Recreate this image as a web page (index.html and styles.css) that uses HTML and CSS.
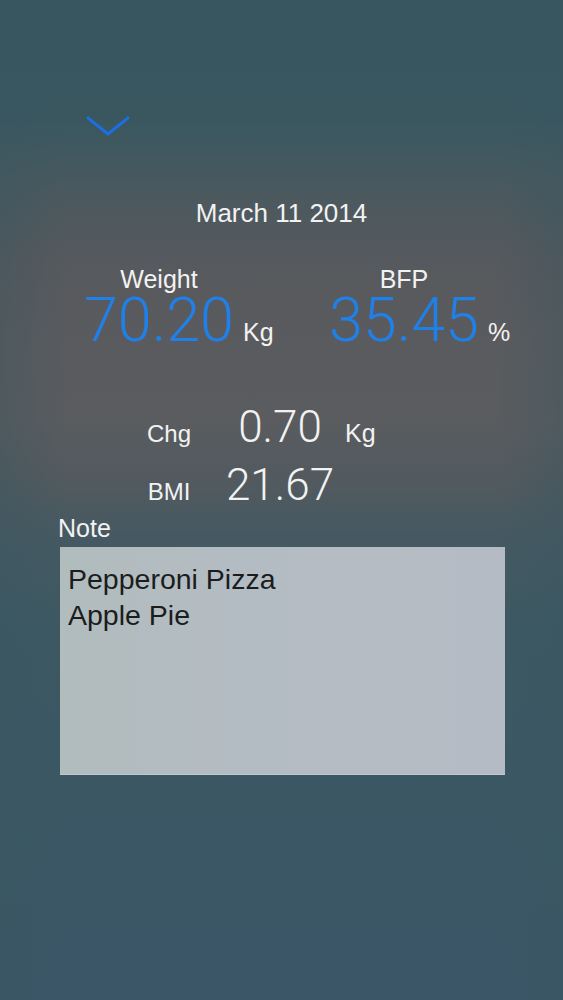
FILE: index.html
```html
<!DOCTYPE html>
<html lang="en">
<head>
<meta charset="utf-8">
<title>Weight Entry</title>
<link rel="stylesheet" href="styles.css">
</head>
<body>
<main class="screen">
  <div class="top">
    <svg class="chevron" width="44" height="22" viewBox="0 0 44 22" aria-hidden="true">
      <polyline points="2,3 22,19 42,3" fill="none" stroke="#1b6fe0" stroke-width="3" stroke-linecap="round" stroke-linejoin="round"/>
    </svg>
  </div>
  <div class="date">March 11 2014</div>
  <div class="metrics">
    <div class="metric">
      <div class="metric-label">Weight</div>
      <div class="metric-value">70.20</div>
      <div class="metric-unit">Kg</div>
    </div>
    <div class="metric">
      <div class="metric-label">BFP</div>
      <div class="metric-value">35.45</div>
      <div class="metric-unit">%</div>
    </div>
  </div>
  <div class="stats">
    <div class="stat-label">Chg</div>
    <div class="stat-value">0.70</div>
    <div class="stat-unit">Kg</div>
    <div class="stat-label">BMI</div>
    <div class="stat-value">21.67</div>
    <div class="stat-unit"></div>
  </div>
  <section class="note">
    <div class="note-label">Note</div>
    <div class="note-box">
      <div class="note-line">Pepperoni Pizza</div>
      <div class="note-line">Apple Pie</div>
    </div>
  </section>
</main>
</body>
</html>
```

FILE: styles.css
```css
* { box-sizing: border-box; }
html, body { margin: 0; padding: 0; }
body {
  font-family: "Liberation Sans", Arial, sans-serif;
  color: #f2f2f2;
}
.screen {
  width: 563px;
  height: 1000px;
  overflow: hidden;
  display: flex;
  flex-direction: column;
  background:
    linear-gradient(90deg, rgba(56,86,96,0.35) 0%, rgba(56,86,96,0) 12%, rgba(56,86,96,0) 88%, rgba(56,86,96,0.35) 100%),
    linear-gradient(180deg, #37565f 0%, #3a5760 12%, #4a595f 19%, #56595d 26%, #5a5b5e 34%, #5a5c5f 42%, #525a5f 48%, #455962 54%, #3d5862 62%, #3b5764 78%, #3b5667 100%);
}
.top {
  padding: 115px 0 0 86px;
  height: 140px;
}
.chevron { display: block; }
.date {
  margin-top: 58px;
  text-align: center;
  font-size: 26px;
  line-height: 30px;
}
.metrics {
  margin-top: 36px;
  display: grid;
  grid-template-columns: 245px auto;
  padding-left: 84px;
}
.metric {
  display: grid;
  grid-template-columns: auto auto;
  align-items: baseline;
  justify-content: start;
  column-gap: 9px;
}
.metric-label {
  grid-column: 1;
  justify-self: center;
  font-size: 25px;
  line-height: 30px;
}
.metric-value {
  grid-column: 1;
  font-family: Roboto, "Liberation Sans", sans-serif;
  font-weight: 300;
  font-size: 61px;
  line-height: 52px;
  color: #1f80ea;
}
.metric-unit {
  grid-column: 2;
  font-size: 25px;
  line-height: 30px;
}
.stats {
  margin-top: 58px;
  display: grid;
  grid-template-columns: 80px 142px auto;
  grid-auto-rows: 58px;
  align-items: baseline;
  padding-left: 129px;
}
.stat-label {
  text-align: center;
  font-size: 24px;
  line-height: 30px;
}
.stat-value {
  text-align: center;
  font-family: Roboto, "Liberation Sans", sans-serif;
  font-weight: 300;
  font-size: 44px;
  line-height: 44px;
}
.stat-unit {
  margin-left: -6px;
  font-size: 25px;
  line-height: 30px;
}
.note {
  margin-top: -8px;
  padding-left: 60px;
}
.note-label {
  margin-left: -2px;
  font-size: 25px;
  line-height: 30px;
}
.note-box {
  margin-top: 4px;
  width: 445px;
  height: 228px;
  background: linear-gradient(90deg, #b1bcbd 0%, #b4bcc3 40%, #b5bbc4 100%);
  border-bottom: 1px solid #c2c8ce;
  padding: 14px 0 0 8px;
  color: #1b1c1d;
}
.note-line {
  font-size: 28.5px;
  line-height: 36px;
}
```
